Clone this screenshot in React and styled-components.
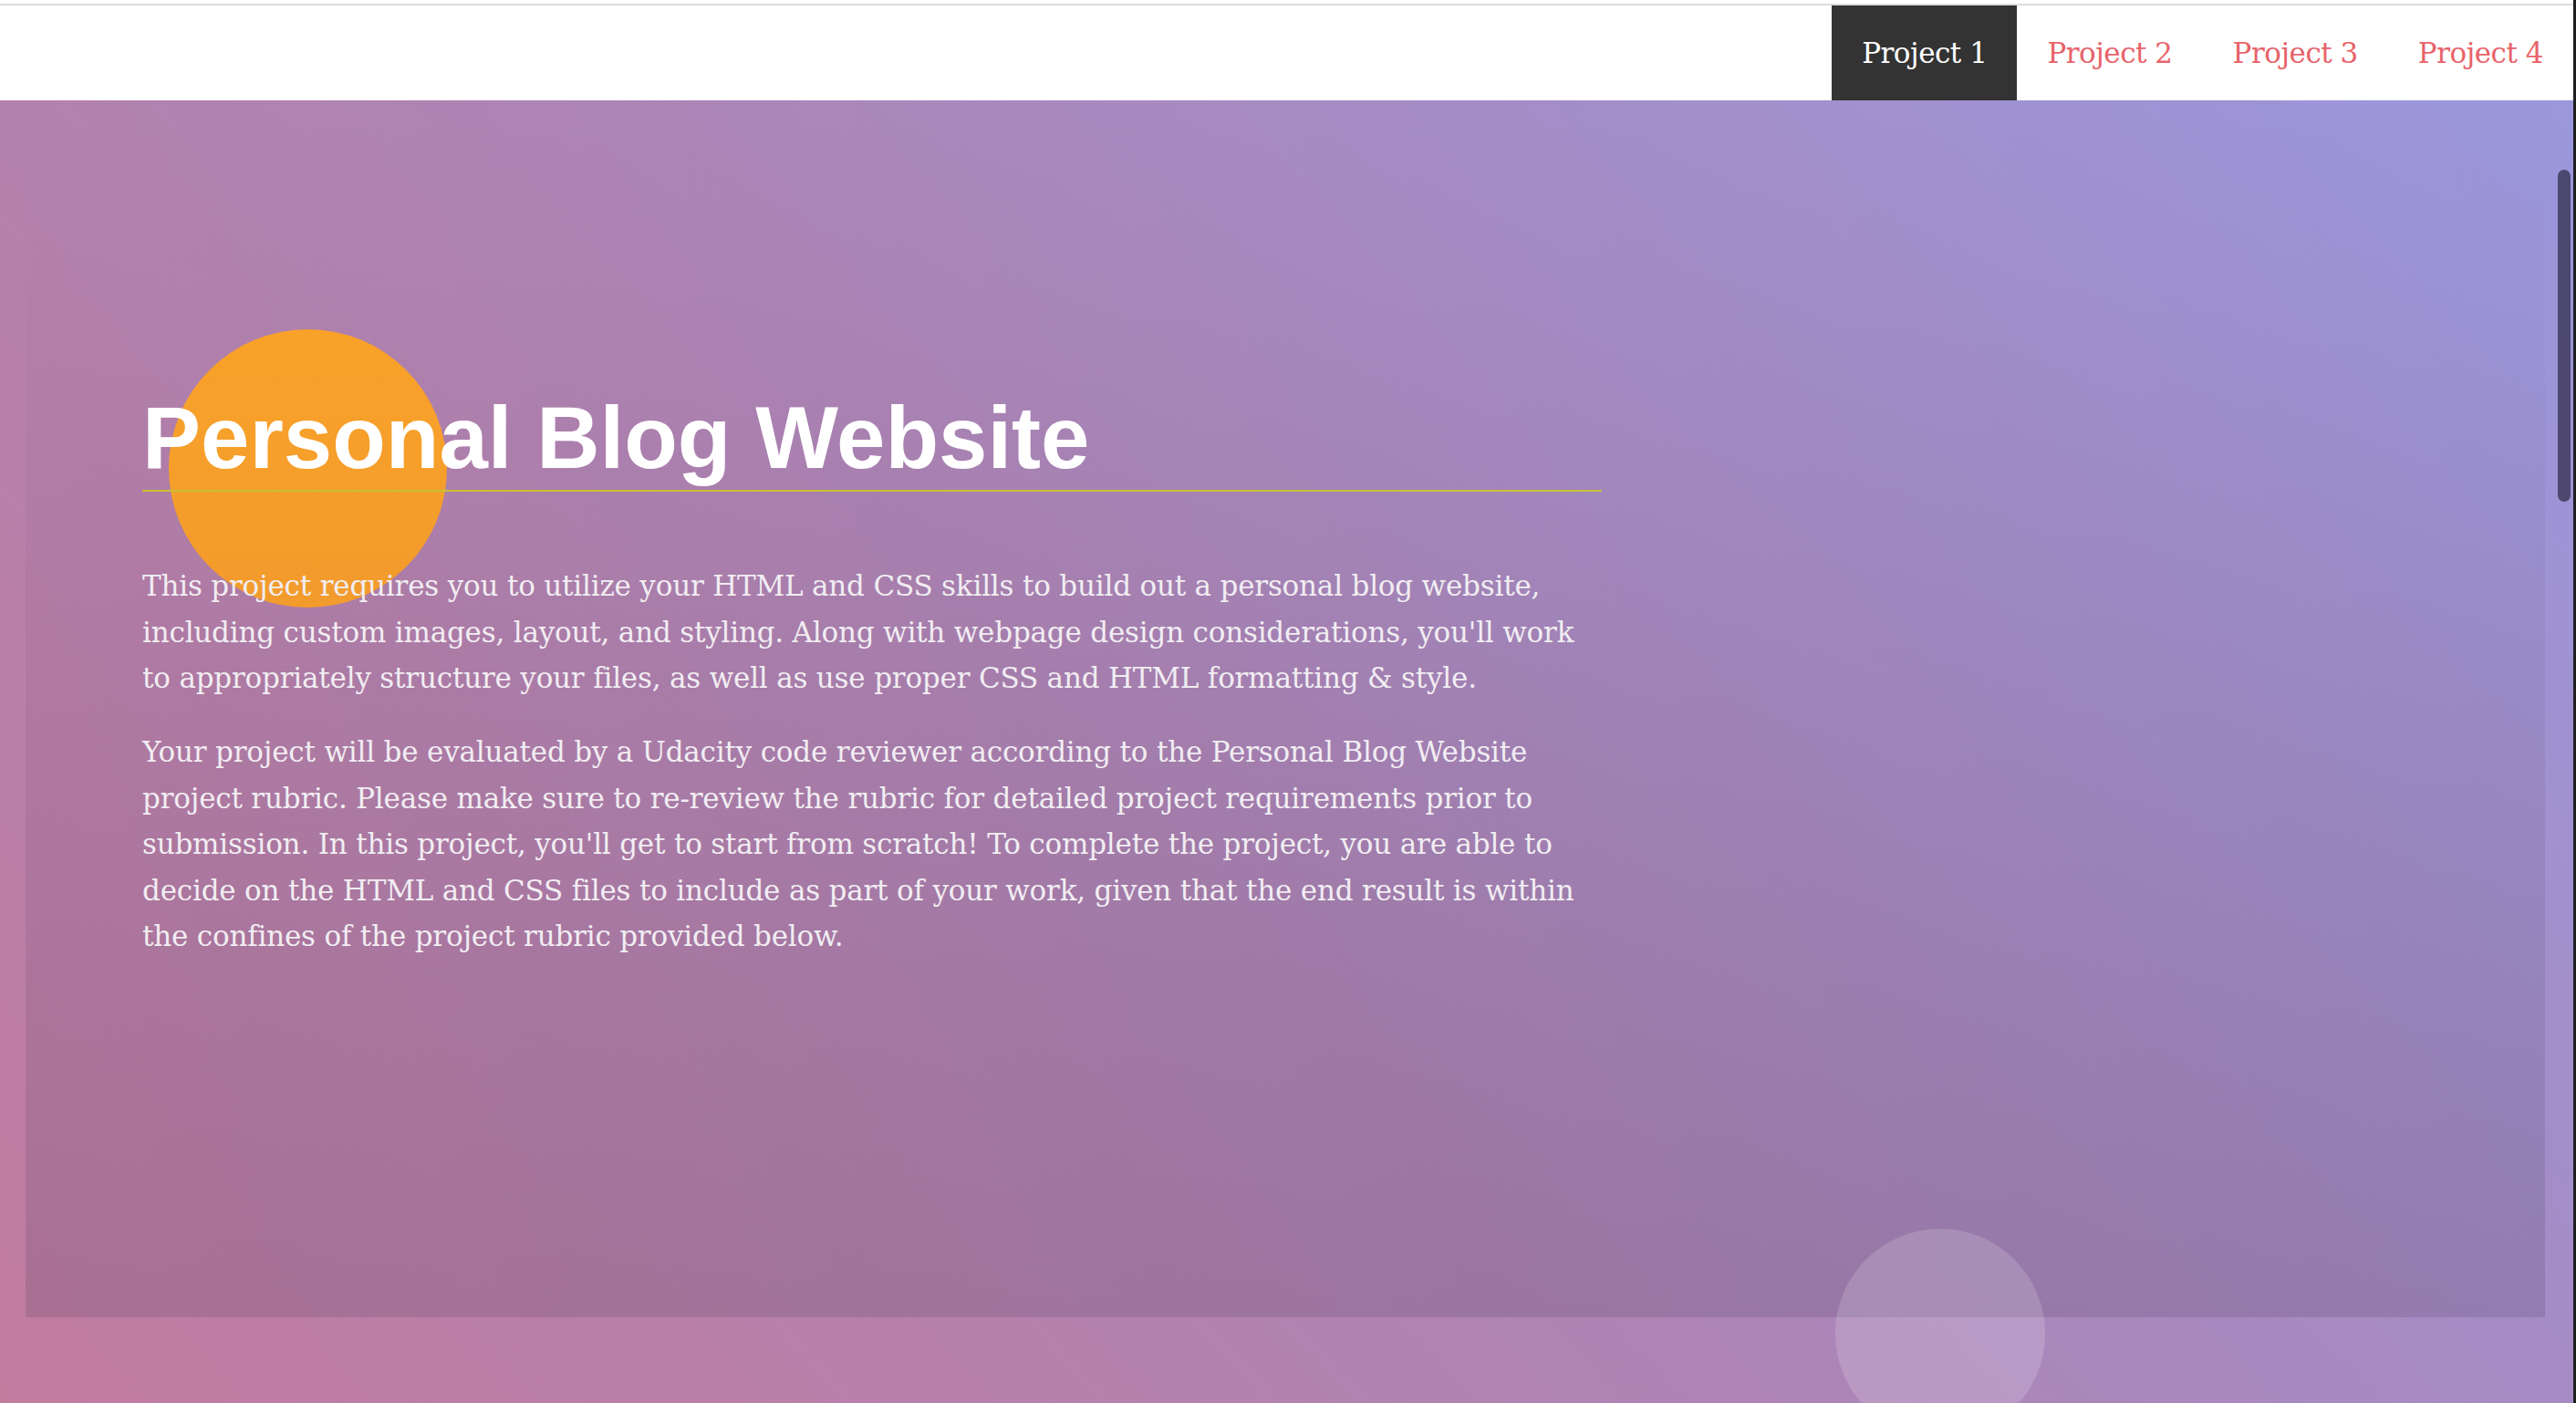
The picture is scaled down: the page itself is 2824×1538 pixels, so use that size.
import React from "react";
import styled, { createGlobalStyle } from "styled-components";

const GlobalStyle = createGlobalStyle`
  html, body {
    margin: 0;
    padding: 0;
    height: 100%;
    overflow: hidden;
    background: #ffffff;
  }
  #root {
    height: 100%;
  }
`;

const serif = `"DejaVu Serif", serif`;

export const Page = styled.div`
  height: 100vh;
  display: flex;
  flex-direction: column;
  border-right: 3px solid #1f1f22;
  box-sizing: border-box;
  position: relative;
`;

export const Header = styled.header`
  padding-top: 4px;
  background: #ffffff;
`;

export const NavBar = styled.nav`
  height: 104px;
  border-top: 2px solid #dcdce0;
  display: flex;
  justify-content: flex-end;
`;

export const NavItem = styled.a`
  display: flex;
  align-items: center;
  padding: 0 33px;
  font-family: ${serif};
  font-size: 31px;
  letter-spacing: -0.5px;
  text-decoration: none;
  color: ${(p) => (p.active ? "#ffffff" : "#e8636a")};
  background: ${(p) => (p.active ? "#333333" : "transparent")};
`;

export const Hero = styled.main`
  flex: 1;
  position: relative;
  overflow: hidden;
  padding: 0 31px 94px 28px;
  background: linear-gradient(47deg, #c27ca0 0%, #ae84b4 45%, #9a97dc 100%);
`;

export const Panel = styled.section`
  height: 100%;
  box-sizing: border-box;
  padding: 315px 0 0 128px;
  background: linear-gradient(
    to bottom,
    rgba(72, 60, 90, 0) 0%,
    rgba(72, 60, 90, 0.02) 15%,
    rgba(72, 60, 90, 0.2) 100%
  );
`;

export const Content = styled.div`
  position: relative;
  z-index: 1;
  width: 1600px;
`;

export const Title = styled.h1`
  margin: 0 0 78px;
  padding-bottom: 2px;
  border-bottom: 2px solid #c9c034;
  font-family: "Liberation Sans", Arial, sans-serif;
  font-weight: 700;
  font-size: 96px;
  line-height: 110px;
  color: #ffffff;
`;

export const Text = styled.p`
  margin: 0 0 30.5px;
  font-family: ${serif};
  font-size: 31px;
  letter-spacing: -0.2px;
  line-height: 50.5px;
  white-space: nowrap;
  color: #f1edf2;
`;

export const Bubble = styled.div`
  position: absolute;
  z-index: 0;
  border-radius: 50%;
  left: ${(p) => p.x}px;
  top: ${(p) => p.y}px;
  width: ${(p) => p.size}px;
  height: ${(p) => p.size}px;
  background: ${(p) => p.color};
`;

export const ScrollThumb = styled.div`
  position: absolute;
  right: 3px;
  top: 186px;
  width: 14px;
  height: 364px;
  border-radius: 7px;
  background: rgba(40, 36, 62, 0.68);
  z-index: 5;
`;

const projects = ["Project 1", "Project 2", "Project 3", "Project 4"];

const paragraphs = [
  [
    "This project requires you to utilize your HTML and CSS skills to build out a personal blog website,",
    "including custom images, layout, and styling. Along with webpage design considerations, you'll work",
    "to appropriately structure your files, as well as use proper CSS and HTML formatting & style.",
  ],
  [
    "Your project will be evaluated by a Udacity code reviewer according to the Personal Blog Website",
    "project rubric. Please make sure to re-review the rubric for detailed project requirements prior to",
    "submission. In this project, you'll get to start from scratch! To complete the project, you are able to",
    "decide on the HTML and CSS files to include as part of your work, given that the end result is within",
    "the confines of the project rubric provided below.",
  ],
];

export default function App() {
  return (
    <>
      <GlobalStyle />
      <Page>
        <Header>
          <NavBar>
            {projects.map((name, i) => (
              <NavItem key={name} href="#" active={i === 0 ? 1 : 0}>
                {name}
              </NavItem>
            ))}
          </NavBar>
        </Header>
        <Hero>
          <Bubble
            x={185}
            y={251}
            size={305}
            color="linear-gradient(to bottom, #f9a229, #f29b2d)"
          />
          <Bubble x={2012} y={1237} size={230} color="rgba(255, 255, 255, 0.16)" />
          <Panel>
            <Content>
              <Title>Personal Blog Website</Title>
              {paragraphs.map((lines, i) => (
                <Text key={i}>
                  {lines.map((line, j) => (
                    <React.Fragment key={j}>
                      {line}
                      {j < lines.length - 1 && <br />}
                    </React.Fragment>
                  ))}
                </Text>
              ))}
            </Content>
          </Panel>
        </Hero>
        <ScrollThumb />
      </Page>
    </>
  );
}
